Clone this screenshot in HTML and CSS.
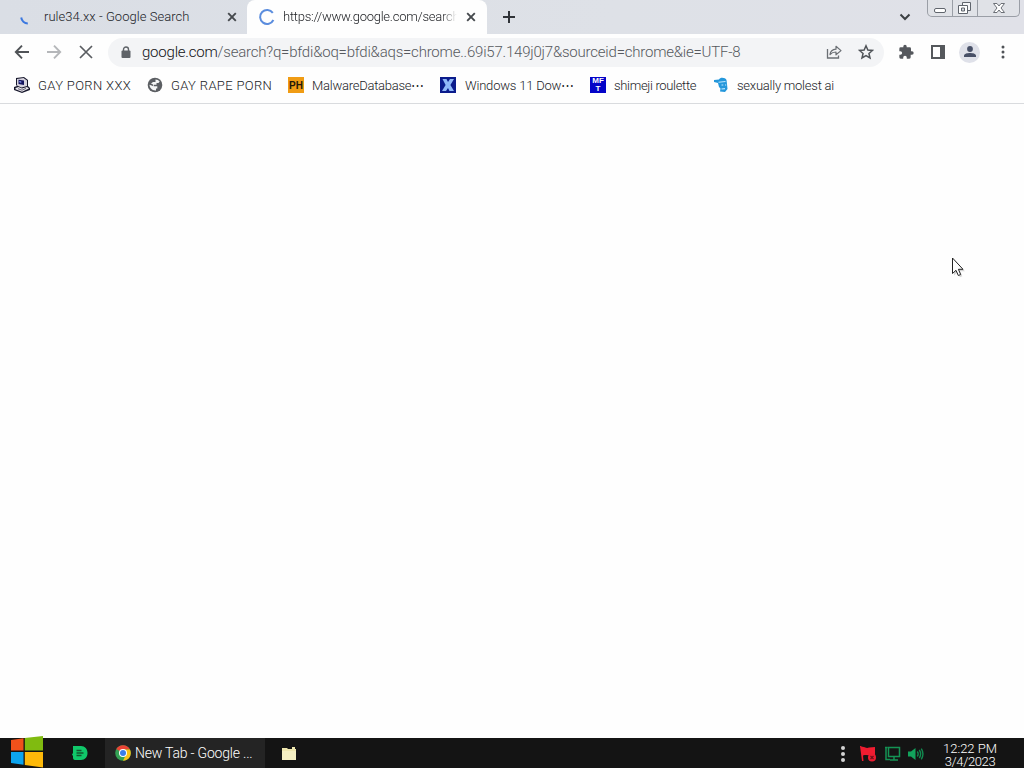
FILE: index.html
```html
<!DOCTYPE html>
<html lang="en">
  <head>
    <meta charset="UTF-8">
    <meta name="viewport" content="width=device-width, initial-scale=1.0">
    <title>google.com/search</title>
    <link rel="stylesheet" href="styles.css">
  </head>
  <body>
    <div class="desktop">
      <div class="tab-strip">
        <div class="tab">
          <svg class="spinner" width="18" height="18" viewBox="0 0 18 18"><path d="M3.200 9.500a7 7 0 0 0 6.600 6" fill="none" stroke="#3b78e0" stroke-width="2"/></svg>
          <span class="tab-title">rule34.xx - Google Search</span>
          <svg class="tab-close" width="10" height="10" viewBox="0 0 10 10"><path d="M1.200 1.200l7.600 7.600M8.800 1.200l-7.600 7.600" stroke="#45494d" stroke-width="1.900"/></svg>
        </div>
        <div class="tab active">
          <svg class="spinner" width="18" height="18" viewBox="0 0 18 18"><path d="M14.800 4.800A7 7 0 1 0 15.400 12" fill="none" stroke="#5b8dde" stroke-width="2"/></svg>
          <span class="tab-title fade">https://www.google.com/search</span>
          <svg class="tab-close" width="10" height="10" viewBox="0 0 10 10"><path d="M1.200 1.200l7.600 7.600M8.800 1.200l-7.600 7.600" stroke="#45494d" stroke-width="1.900"/></svg>
        </div>
        <svg class="new-tab" width="14" height="14" viewBox="0 0 14 14"><path d="M7 1v12M1 7h12" stroke="#303338" stroke-width="2"/></svg>
        <svg class="tab-search" width="12" height="8" viewBox="0 0 12 8"><path d="M1.500 1.500L6 6l4.500-4.500" fill="none" stroke="#3c4043" stroke-width="2"/></svg>
        <div class="window-buttons">
          <span class="win-btn min"><svg width="14" height="17" viewBox="0 0 14 17"><rect x="1.500" y="8.500" width="11" height="4" rx="1.500" fill="#fff" stroke="#60656d"/></svg></span>
          <span class="win-btn max"><svg width="16" height="17" viewBox="0 0 16 17"><path d="M5.500 2.500h8v8h-8z" fill="#f5f6f8" stroke="#60656d"/><path d="M1.500 5.500h9v8h-9z" fill="#fff" stroke="#60656d"/><path d="M4.500 8h3v3h-3z" fill="#d6dae0" stroke="#60656d"/></svg></span>
          <span class="win-btn close"><svg width="14" height="17" viewBox="0 0 14 17"><path d="M1.500 3.500h3.500l2 2.500 2-2.500h3.500L9 8l3.500 4.500H9L7 10l-2 2.500H1.500L5 8z" fill="#fff" stroke="#6c7077"/></svg></span>
        </div>
      </div>

      <div class="toolbar">
        <svg class="nav" width="16" height="16" viewBox="0 0 16 16"><path d="M15 8H2M8 1.700L1.800 8 8 14.300" fill="none" stroke="#505357" stroke-width="1.900"/></svg>
        <svg class="nav" width="16" height="16" viewBox="0 0 16 16"><path d="M1 8h13M8 1.700L14.200 8 8 14.300" fill="none" stroke="#b5b7ba" stroke-width="1.900"/></svg>
        <svg class="nav" width="16" height="16" viewBox="0 0 16 16"><path d="M2 2l12 12M14 2L2 14" stroke="#5a5d61" stroke-width="1.700"/></svg>
        <div class="omnibox">
          <svg class="lock" width="10" height="13" viewBox="0 0 10 13"><path d="M2.500 5V3.500a2.500 2.500 0 0 1 5 0V5" fill="none" stroke="#5f6368" stroke-width="1.400"/><rect x=".5" y="4.500" width="9" height="7.500" rx="1" fill="#5f6368"/></svg>
          <span class="url"><b>google.com</b>/search?q=bfdi&amp;oq=bfdi&amp;aqs=chrome..69i57.149j0j7&amp;sourceid=chrome&amp;ie=UTF-8</span>
          <svg class="share" width="16" height="16" viewBox="0 0 16 16"><path d="M1.500 5v9h11v-2.500" fill="none" stroke="#6b6f74" stroke-width="1.300"/><path d="M4 10.500c.4-3.400 2.400-5 6-5.300V2.300L15 6.600l-5 4.200V8c-2.700 0-4.500.8-6 2.500z" fill="none" stroke="#6b6f74" stroke-width="1.200" stroke-linejoin="round"/></svg>
          <svg class="star" width="16" height="16" viewBox="0 0 16 16"><path d="M8 1.800l1.850 4.250 4.600.4-3.500 3.050 1.050 4.500L8 11.600 4 14l1.050-4.500-3.500-3.050 4.600-.4z" fill="none" stroke="#505459" stroke-width="1.500"/></svg>
        </div>
        <svg class="ext" width="16" height="16" viewBox="0 0 24 24"><path d="M21 11h-1.500V7a2 2 0 0 0-2-2H13V3.500a2.500 2.500 0 0 0-5 0V5H4a2 2 0 0 0-2 2v3.800h1.500a2.700 2.700 0 0 1 0 5.400H2V20a2 2 0 0 0 2 2h3.800v-1.500a2.700 2.700 0 0 1 5.400 0V22H17a2 2 0 0 0 2-2v-4h2a2.500 2.500 0 0 0 0-5z" fill="#55585d"/></svg>
        <svg class="panel" width="14" height="14" viewBox="0 0 14 14"><path d="M0 0h14v14H0zM2 2v10h7V2z" fill="#55585c" fill-rule="evenodd"/></svg>
        <span class="avatar"><svg width="14" height="14" viewBox="0 0 14 14"><circle cx="7" cy="4" r="2.900" fill="#485067"/><path d="M1 12v-1.400C1 8.800 4.500 8 7 8s6 .8 6 2.600V12z" fill="#485067"/></svg></span>
        <svg class="menu" width="4" height="14" viewBox="0 0 4 14"><g fill="#505357"><circle cx="2" cy="2" r="1.500"/><circle cx="2" cy="7" r="1.500"/><circle cx="2" cy="12" r="1.500"/></g></svg>
      </div>

      <div class="bookmarks">
        <div class="bookmark bm-1">
          <svg width="16" height="16" viewBox="0 0 16 16"><path d="M2 1l8-1 4 3v6l2 2v2l-8 3-8-3v-3l3-1-1-1z" fill="#17172c"/><path d="M3 2l6.500-1L13 3.500V9l-5.500 1.500L3 8.500z" fill="#d6d3de"/><path d="M4.500 2.800l5.500.7v4.500l-5.500-1z" fill="#15155e"/><path d="M5.300 4l2 .4v1.300l-2-.4z" fill="#8ea4ff"/><path d="M1.500 11l3-1 3.500 1.500 5-1.500 2 1.500L8 14.800l-6.500-2.500z" fill="#e8e6ea"/><path d="M4 11.700l4 1.500 4-1.800" fill="none" stroke="#68657a"/></svg>
          <span>GAY PORN XXX</span>
        </div>
        <div class="bookmark bm-2">
          <svg width="16" height="16" viewBox="0 0 16 16"><circle cx="8" cy="8" r="7.300" fill="#5b5e62"/><path d="M8.500 2.500c1.800 0 3.200.8 4.200 2.100L11.500 6H9.500v1.700H6.700V9.300h3.600v2.200H9V13.400c-3.500.4-6.300-2-6.500-5.600L6 9V7.500L4 6.500l2-1.500h2.500z" fill="#f4f5f5"/></svg>
          <span>GAY RAPE PORN</span>
        </div>
        <div class="bookmark bm-3">
          <i class="favicon ph">PH</i>
          <span>MalwareDatabase⋯</span>
        </div>
        <div class="bookmark bm-4">
          <svg width="16" height="16" viewBox="0 0 16 16"><path d="M0 0h16v16H0z" fill="#0b1c8c"/><path d="M2.500 2h4L8 5l2-3h4l-3.600 6 3.600 6H9.500L8 11l-2 3H2l3.600-6z" fill="#8fb8f8"/></svg>
          <span>Windows 11 Dow⋯</span>
        </div>
        <div class="bookmark bm-5">
          <i class="favicon mft"><b>MF</b><b>T</b></i>
          <span>shimeji roulette</span>
        </div>
        <div class="bookmark bm-6">
          <svg width="16" height="16" viewBox="0 0 16 16"><path d="M1 3l5-.5C7 0 12.500.500 13.500 3l.5 4 .5 5-2.500 3-5-.5.5-3-1.500-1.500L5 6 1 5z" fill="#2497db"/><path d="M5.500 5.300l7-.8M8.500 8h1.800M12 8h1.200M8.500 12l3.500-.4" stroke="#bfe8ff" stroke-width="1.100"/></svg>
          <span>sexually molest ai</span>
        </div>
      </div>

      <div class="page"></div>

      <div class="taskbar">
        <svg class="start" width="34" height="32" viewBox="0 0 34 32"><path d="M1 4l12.500-1.700v12.200H1z" fill="#f1511b"/><path d="M14.800 2L33 0v14.500H14.800z" fill="#80bb10"/><path d="M1 16h12.500v12.700L1 27z" fill="#0ca4ee"/><path d="M14.800 16H33v15.500l-18.200-2.600z" fill="#fdb909"/></svg>
        <svg class="app-d" width="16" height="14" viewBox="0 0 16 14"><path d="M1 0h8c4 0 6.500 3 6.500 7S13 14 9 14H3c-1.500 0-2-1-2-2.500V10L0 8.500 1 7z" fill="#10c86a"/><path d="M4.500 4.500h5M4.500 7h7M4.500 9.500h5" stroke="#12572f" stroke-width="1.300"/></svg>
        <div class="task">
          <svg width="16" height="16" viewBox="0 0 16 16"><circle cx="8" cy="8" r="7.800" fill="#34a053"/><path d="M8 8L1.250 4.100A7.800 7.800 0 0 1 14.750 4.100L15 4.600H8z" fill="#ea4335"/><path d="M8 8V4.600h7A7.800 7.800 0 0 1 8 15.800L11.300 9z" fill="#fbc116"/><circle cx="8" cy="8" r="4" fill="#fff"/><circle cx="8" cy="8" r="3" fill="#3b7de9"/></svg>
          <span>New Tab - Google ...</span>
        </div>
        <svg class="folder" width="14" height="13" viewBox="0 0 14 13"><path d="M0 1h5l1 1h4V0h3v2h1v11H0z" fill="#eee6ae"/><path d="M0 4h14v9H0z" fill="#f5efc2"/></svg>
        <div class="tray">
          <svg width="6" height="18" viewBox="0 0 6 18"><g fill="#d4d4d4"><circle cx="3" cy="3" r="2"/><circle cx="3" cy="9" r="2"/><circle cx="3" cy="15" r="2"/></g></svg>
          <svg class="flag" width="18" height="16" viewBox="0 0 18 16"><path d="M1 0h1.500v1C5 0 7 3 10 1.500l6-.5v8c-4 1.500-8-1-12 .5L4.500 15H3z" fill="#f01c30"/><circle cx="13" cy="11.500" r="4" fill="#ec1c30"/><path d="M11.500 10l3 3m0-3l-3 3" stroke="#6e101a" stroke-width="1.200"/></svg>
          <svg class="net" width="17" height="16" viewBox="0 0 17 16"><path d="M4.500 1.500h11v9h-11zM10 10.500v3M6 14h8M1 1.500h2.500M2 1v12.500h4" fill="none" stroke="#149354" stroke-width="1.500"/></svg>
          <svg class="vol" width="16" height="14" viewBox="0 0 16 14"><path d="M0 4.500h3L7.500 1v12L3 9.500H0z" fill="#12a35c"/><path d="M9.300 4.500q1.700 2.500 0 5M11.300 3q2.700 4 0 8M13.300 1.700q3.300 5.300 0 10.600" fill="none" stroke="#128a50" stroke-width="1.400"/></svg>
        </div>
        <div class="clock"><span>12:22 PM</span><span class="date">3/4/2023</span></div>
      </div>

      <svg class="cursor" width="16" height="22" viewBox="0 0 16 22"><path d="M2 2.500v15l3.500-3.200 2.300 5 2.500-1.100-2.300-4.900h5z" fill="#999" opacity=".4" transform="translate(1 1)"/><path d="M1.500 1v15.500L5 13.300l2.300 5.200 2.400-1-2.300-5.200H12z" fill="#fff" stroke="#222" stroke-width="1"/></svg>
    </div>
  </body>
</html>
```

FILE: styles.css
```css
body {
    margin: 0;
    background: #fefefe;
    font-family: Roboto, "Liberation Sans", sans-serif;
    font-weight: 300;
    color: #202226;
}

.desktop {
    position: relative;
    width: 1024px;
    height: 768px;
    display: flex;
    flex-direction: column;
    overflow: hidden;
}

svg {
    display: block;
    flex: none;
}

span {
    white-space: nowrap;
}

/* tabs */
.tab-strip {
    height: 34px;
    display: flex;
    background: linear-gradient(90deg, #dadee5, #dee1e7 60%, #e0e1e8);
}

.tab {
    width: 247px;
    box-sizing: border-box;
    padding-left: 18px;
    display: flex;
    align-items: center;
}

.tab.active {
    width: 240px;
    padding-left: 11px;
    background: #fefefe;
    border-radius: 8px 8px 0 0;
}

.tab-title {
    width: 174px;
    margin-left: 8px;
    overflow: hidden;
    font-size: 13px;
    letter-spacing: 0.04px;
    line-height: 20px;
}

.tab.active .tab-title {
    margin-left: 7px;
    letter-spacing: -0.25px;
}

.fade {
    -webkit-mask-image: linear-gradient(90deg, #000 91%, transparent);
    mask-image: linear-gradient(90deg, #000 91%, transparent);
}

.tab-close {
    margin-left: 9px;
}

.new-tab {
    margin: 10px 0 0 15px;
}

.tab-search {
    margin: 13px 16px 0 auto;
}

.window-buttons {
    display: flex;
    width: 93px;
    height: 17px;
    box-sizing: border-box;
    margin-right: 4px;
    border: 1px solid #9a9ea6;
    border-top: none;
    border-radius: 0 0 5px 5px;
    background: #e0e2e7;
}

.win-btn {
    display: flex;
    justify-content: center;
    box-sizing: border-box;
    width: 25px;
    border-right: 1px solid #9a9ea6;
}

.win-btn.close {
    width: 41px;
    border-right: none;
}

/* toolbar */
.toolbar {
    height: 36px;
    display: flex;
    align-items: center;
    padding-left: 14px;
    background: #fefefe;
}

.nav {
    margin-right: 16px;
}

.omnibox {
    display: flex;
    align-items: center;
    box-sizing: border-box;
    width: 776px;
    height: 29px;
    margin-left: -2px;
    padding: 0 10px 0 13px;
    border-radius: 15px;
    background: #f3f4f6;
}

.url {
    width: 684px;
    margin-left: 11px;
    font-size: 15px;
    letter-spacing: -0.21px;
    line-height: 18px;
    color: #56595e;
}

.url b {
    font-weight: 300;
    color: #101114;
}

.star {
    margin-left: 16px;
}

.ext {
    margin-left: 14px;
}

.panel {
    margin-left: 17px;
}

.avatar {
    display: flex;
    align-items: center;
    justify-content: center;
    width: 21px;
    height: 21px;
    margin-left: 14px;
    border-radius: 50%;
    background: #dfe1e9;
}

.menu {
    margin-left: 21px;
}

/* bookmarks */
.bookmarks {
    height: 33px;
    display: flex;
    padding-left: 14px;
    border-bottom: 1px solid #d9dbde;
    background: #fefefe;
}

.bookmark {
    display: flex;
    align-items: center;
    box-sizing: border-box;
    height: 30px;
    gap: 8px;
    font-size: 13px;
}

.bookmark span {
    padding-top: 1px;
}

.bm-1 { width: 133px; letter-spacing: 0.36px; }
.bm-2 { width: 141px; letter-spacing: 0.35px; }
.bm-3 { width: 152px; letter-spacing: -0.25px; }
.bm-4 { width: 150px; gap: 9px; letter-spacing: -0.2px; }
.bm-5 { width: 123px; letter-spacing: -0.32px; }
.bm-6 { letter-spacing: -0.24px; }

.favicon {
    width: 16px;
    height: 16px;
    flex: none;
    font-family: "Liberation Sans", sans-serif;
    font-style: normal;
    font-weight: 700;
    letter-spacing: 0;
    text-align: center;
}

.ph {
    background: #f09c14;
    color: #241808;
    font-size: 10px;
    line-height: 17px;
}

.mft {
    background: #0404c8;
    color: #fff;
    font-size: 8px;
    line-height: 8px;
}

.mft b {
    display: block;
}

.page {
    flex: 1;
    background: #fefefe;
}

/* taskbar */
.taskbar {
    height: 30px;
    display: flex;
    align-items: center;
    background: #141414;
    color: #fff;
}

.start {
    align-self: flex-end;
    margin-left: 10px;
}

.app-d {
    margin-left: 28px;
}

.task {
    display: flex;
    align-items: center;
    box-sizing: border-box;
    width: 160px;
    height: 30px;
    margin-left: 17px;
    padding-left: 10px;
    gap: 4px;
    background: #242424;
    font-size: 14px;
    letter-spacing: -0.2px;
}

.folder {
    margin-left: 17px;
}

.tray {
    display: flex;
    align-items: center;
    margin-left: auto;
}

.tray svg {
    margin-top: 2px;
}

.tray .flag {
    margin-left: 13px;
}

.tray .net {
    margin-left: 7px;
}

.tray .vol {
    margin-left: 7px;
}

.clock {
    display: flex;
    flex-direction: column;
    align-items: center;
    width: 60px;
    margin: 3px 24px 0 16px;
    font-size: 13px;
    line-height: 13px;
}

.clock .date {
    letter-spacing: -0.4px;
}

.cursor {
    position: absolute;
    left: 951px;
    top: 257px;
}
```
